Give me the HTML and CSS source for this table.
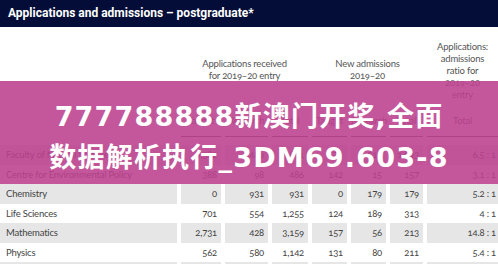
FILE: index.html
```html
<!DOCTYPE html>
<html lang="en">
<head>
  <meta charset="UTF-8" />
  <title>Applications and admissions</title>
  <link rel="stylesheet" href="styles.css">
</head>
<body>

  <header class="title-bar">Applications and admissions – postgraduate*</header>

  <div class="sheet">
    <div class="table-head">
      <div class="group g-apps">Applications received<br>for 2019–20 entry</div>
      <div class="group g-adm">New admissions<br>2019–20</div>
      <div class="group g-ratio">Applications:<br>admissions<br>ratio for<br>2019–20<br>entry</div>

      <div class="sub c1">Taught</div>
      <div class="sub c2">Research</div>
      <div class="sub c3">Total</div>
      <div class="sub c4">Taught</div>
      <div class="sub c5">Research</div>
      <div class="sub c6">Total</div>
      <div class="sub c7">Total</div>
    </div>

    <div class="rows">
      <div class="row grey">
        <div>Faculty of Natural Sciences</div><div>4,382</div><div>2,489</div><div>6,871</div><div>574</div><div>519</div><div>1,093</div><div>6.5 : 1</div>
      </div>
      <div class="row">
        <div>Centre for Environmental Policy</div><div>388</div><div>98</div><div>486</div><div>142</div><div>15</div><div>157</div><div>3.1 : 1</div>
      </div>
      <div class="row grey">
        <div>Chemistry</div><div>0</div><div>931</div><div>931</div><div>0</div><div>179</div><div>179</div><div>5.2 : 1</div>
      </div>
      <div class="row">
        <div>Life Sciences</div><div>701</div><div>554</div><div>1,255</div><div>124</div><div>189</div><div>313</div><div>4 : 1</div>
      </div>
      <div class="row grey">
        <div>Mathematics</div><div>2,731</div><div>428</div><div>3,159</div><div>157</div><div>56</div><div>213</div><div>14.8 : 1</div>
      </div>
      <div class="row">
        <div>Physics</div><div>562</div><div>580</div><div>1,142</div><div>131</div><div>80</div><div>211</div><div>5.4 : 1</div>
      </div>
      <div class="row grey">
        <div>Faculty of Medicine</div><div>1,904</div><div>1,320</div><div>3,224</div><div>611</div><div>268</div><div>879</div><div>3.7 : 1</div>
      </div>
    </div>
  </div>

  <div class="banner">
    <p>777788888新澳门开奖,全面</p>
    <p>数据解析执行_3DM69.603-8</p>
  </div>

</body>
</html>
```

FILE: styles.css
```css
* { margin: 0; padding: 0; box-sizing: border-box; }
body {
  width: 498px;
  height: 264px;
  overflow: hidden;
  background: #fff;
  font-family: 'Lato', 'Liberation Sans', sans-serif;
  color: #444;
  position: relative;
}

.title-bar {
  height: 27px;
  background-color: #030d38;
  color: #fff;
  font-family: 'Roboto', sans-serif;
  font-weight: bold;
  font-size: 12px;
  line-height: 27px;
  padding-left: 8px;
}

/* shared column widths for the table */
.table-head, .row {
  display: grid;
  grid-template-columns: 177px 40px 43px 36px 35px 35px 33px 1fr;
  column-gap: 4px;
}

.table-head {
  font-size: 9.5px;
  letter-spacing: -0.2px;
  line-height: 12px;
  color: #555;
  font-variant-numeric: oldstyle-nums;
  padding-top: 14px;
}
.group { text-align: center; grid-row: 1; }
.g-apps { grid-column: 2 / 5; align-self: end; margin-bottom: 19px; }
.g-adm { grid-column: 5 / 8; align-self: end; margin-bottom: 19px; }
.g-ratio { grid-column: 8; }

.sub {
  grid-row: 2;
  text-align: center;
  padding: 14px 0 9px;
  border-bottom: 1px solid #555;
}
.c1 { grid-column: 2; } .c2 { grid-column: 3; } .c3 { grid-column: 4; }
.c4 { grid-column: 5; } .c5 { grid-column: 6; } .c6 { grid-column: 7; }
.c7 { grid-column: 8; }

.rows { margin-top: 8px; }
.row {
  height: 19.5px;
  font-size: 9.5px;
  letter-spacing: -0.2px;
  line-height: 19.5px;
  font-variant-numeric: oldstyle-nums;
}
.row div { text-align: right; padding-right: 4px; }
.row div:first-child { text-align: left; padding-left: 6px; }
.row div:last-child { padding-right: 2px; }
.row.grey div { background-color: #e6e6e6; }

/* overlay band */
.banner {
  position: absolute;
  left: 0; right: 0;
  top: 81px;
  height: 103px;
  padding-top: 8px;
  background-color: rgba(188, 64, 141, 0.88);
  display: flex;
  flex-direction: column;
  justify-content: center;
  align-items: center;
  color: #fff;
  font-family: 'DejaVu Sans', 'Noto Sans CJK SC', sans-serif;
  font-weight: bold;
  font-size: 27px;
  line-height: 41px;
  letter-spacing: 1.2px;
}
```
